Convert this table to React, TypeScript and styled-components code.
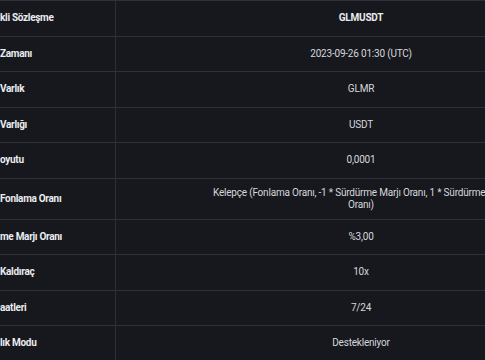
import React from 'react';
import styled, { createGlobalStyle } from 'styled-components';

interface SpecRow {
  label: string;
  value: string;
  strong?: boolean;
}

const rows: SpecRow[] = [
  { label: 'kli Sözleşme', value: 'GLMUSDT', strong: true },
  { label: 'Zamanı', value: '2023-09-26 01:30 (UTC)' },
  { label: 'Varlık', value: 'GLMR' },
  { label: 'Varlığı', value: 'USDT' },
  { label: 'oyutu', value: '0,0001' },
  {
    label: 'Fonlama Oranı',
    value: 'Kelepçe (Fonlama Oranı, -1 * Sürdürme Marjı Oranı, 1 * Sürdürme Marjı Oranı)',
  },
  { label: 'me Marjı Oranı', value: '%3,00' },
  { label: 'Kaldıraç', value: '10x' },
  { label: 'aatleri', value: '7/24' },
  { label: 'lık Modu', value: 'Destekleniyor' },
];

const GlobalStyle = createGlobalStyle`
  html, body {
    margin: 0;
    padding: 0;
    background: #17181e;
    overflow: hidden;
  }
  body {
    font-family: Roboto, "Noto Sans", sans-serif;
  }
`;

const Page = styled.div`
  width: 485px;
  height: 360px;
  overflow: hidden;
  background: #17181e;
`;

const Table = styled.div`
  width: 606px;
  border-top: 1px solid #2e3038;
`;

const Row = styled.div`
  display: grid;
  grid-template-columns: 116px 490px;
  min-height: 35.5px;
  box-sizing: border-box;
  border-bottom: 1px solid #2e3038;
`;

const LabelCell = styled.div`
  display: flex;
  align-items: center;
  padding: 8px 0;
  border-right: 1px solid #2e3038;
  color: #eaecef;
  font-size: 10px;
  font-weight: 700;
  letter-spacing: -0.3px;
  line-height: 12px;
  white-space: nowrap;
  overflow: hidden;
`;

const ValueCell = styled.div<{ $strong?: boolean }>`
  display: flex;
  align-items: center;
  justify-content: center;
  padding: 8px 95px;
  text-align: center;
  color: ${({ $strong }) => ($strong ? '#eaecef' : '#d6d7da')};
  font-size: 10px;
  font-weight: ${({ $strong }) => ($strong ? 700 : 400)};
  letter-spacing: -0.2px;
  line-height: 12px;
`;

const App: React.FC = () => {
  return (
    <Page>
      <GlobalStyle />
      <Table>
        {rows.map((row) => (
          <Row key={row.label}>
            <LabelCell>{row.label}</LabelCell>
            <ValueCell $strong={row.strong}>{row.value}</ValueCell>
          </Row>
        ))}
      </Table>
    </Page>
  );
};

export default App;
